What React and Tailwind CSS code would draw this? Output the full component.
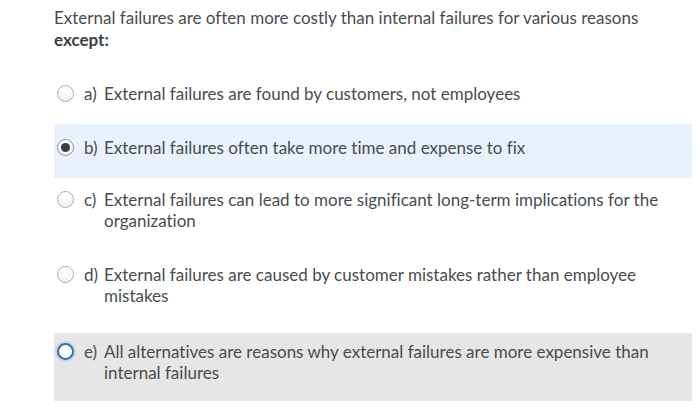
const OPTIONS = [
  { key: 'a', text: 'External failures are found by customers, not employees', state: 'off', pad: 'pt-[13px] pb-[20px]' },
  { key: 'b', text: 'External failures often take more time and expense to fix', state: 'checked', pad: 'pt-[13px] pb-[20px]' },
  { key: 'c', text: 'External failures can lead to more significant long-term implications for the organization', state: 'off', pad: 'pt-[11px] pb-[20px]' },
  { key: 'd', text: 'External failures are caused by customer mistakes rather than employee mistakes', state: 'off', pad: 'pt-[13px] pb-[20px]' },
  { key: 'e', text: 'All alternatives are reasons why external failures are more expensive than internal failures', state: 'focus', pad: 'mt-[7px] pt-[8px] pb-[18px]' },
];

const Radio = ({ state }) => {
  if (state === 'checked') {
    return (
      <span className="mt-[2px] flex h-[17px] w-[17px] shrink-0 items-center justify-center rounded-full border border-[#8f9295] bg-gradient-to-b from-white to-[#f1f2f3]">
        <span className="h-[9px] w-[9px] rounded-full bg-[#3a3d40]" />
      </span>
    );
  }
  if (state === 'focus') {
    return (
      <span className="mt-[2px] h-[17px] w-[17px] shrink-0 rounded-full border-2 border-[#3d6e9e] bg-white shadow-[0_0_0_2px_rgba(170,205,240,0.6)]" />
    );
  }
  return (
    <span className="mt-[2px] h-[17px] w-[17px] shrink-0 rounded-full border border-[#a8abad] bg-gradient-to-b from-white to-[#f1f2f3]" />
  );
};

export default function App() {
  return (
    <div className="min-h-[417px] w-[700px] bg-white font-['Lato',sans-serif] text-[17px] text-[#494c4e] [font-variant-ligatures:none]">
      <div className="ml-[54px] w-[638px]">
        <p className="pt-[7px] pb-[19px] leading-[22px]">
          External failures are often more costly than internal failures for various reasons <b className="font-bold text-[#3c3f41]">except:</b>
        </p>

        {OPTIONS.map(opt => {
          let rowClasses = `flex leading-[21px] ${opt.pad}`;
          if (opt.state === 'checked') rowClasses += ' bg-[#e8f1fc]';
          if (opt.state === 'focus') rowClasses += ' bg-[#e6e6e6]';
          return (
            <div key={opt.key} className={rowClasses}>
              <div className="ml-[3px] mr-[10px] flex">
                <Radio state={opt.state} />
              </div>
              <span className="w-[20px] shrink-0">{opt.key})</span>
              <span className="pr-[20px]">{opt.text}</span>
            </div>
          );
        })}
      </div>
    </div>
  );
}
